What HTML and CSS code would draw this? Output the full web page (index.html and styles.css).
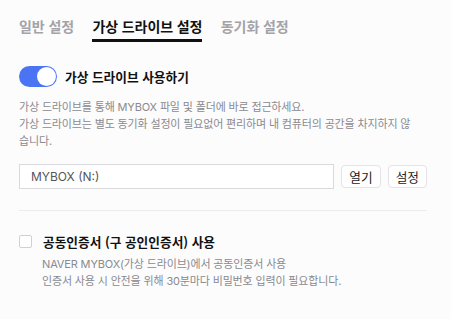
FILE: index.html
```html
<!DOCTYPE html>
<html lang="ko">
<head>
<meta charset="utf-8">
<link rel="stylesheet" href="styles.css">
</head>
<body>
<div class="page">
  <nav class="tabs">
    <div class="tab">일반 설정</div>
    <div class="tab active">가상 드라이브 설정</div>
    <div class="tab">동기화 설정</div>
  </nav>

  <section class="section">
    <div class="option-row">
      <span class="toggle"><span class="knob"></span></span>
      <span class="option-title">가상 드라이브 사용하기</span>
    </div>
    <p class="desc">가상 드라이브를 통해 MYBOX 파일 및 폴더에 바로 접근하세요.<br>가상 드라이브는 별도 동기화 설정이 필요없어 편리하며 내 컴퓨터의 공간을 차지하지 않습니다.</p>
    <div class="drive-row">
      <div class="drive-input">MYBOX (N:)</div>
      <button class="btn">열기</button>
      <button class="btn">설정</button>
    </div>
  </section>

  <hr class="divider">

  <section class="section">
    <div class="check-row">
      <span class="checkbox"></span>
      <span class="option-title">공동인증서 (구 공인인증서) 사용</span>
    </div>
    <p class="desc sub">NAVER MYBOX(가상 드라이브)에서 공동인증서 사용<br>인증서 사용 시 안전을 위해 30분마다 비밀번호 입력이 필요합니다.</p>
  </section>
</div>
</body>
</html>
```

FILE: styles.css
```css
html, body {
  margin: 0;
  padding: 0;
  background: #fcfcfd;
}
body {
  font-family: "Inter", "Noto Sans CJK KR", sans-serif;
  color: #111;
}
.page {
  padding: 0 24px 0 19px;
}
.tabs {
  display: flex;
  gap: 18.5px;
}
.tab {
  font-family: "Noto Sans CJK KR", sans-serif;
  font-size: 14px;
  font-weight: 700;
  line-height: 18px;
  letter-spacing: -0.1px;
  padding: 17px 0 4px;
  color: #a3a3a8;
  border-bottom: 3px solid transparent;
}
.tab.active {
  color: #111;
  border-bottom-color: #111;
}
.section {
  display: flex;
  flex-direction: column;
}
.option-row {
  display: flex;
  align-items: center;
  margin-top: 24px;
  height: 21px;
}
.toggle {
  position: relative;
  width: 38px;
  height: 21px;
  border-radius: 11px;
  background: #4a74f4;
  flex: none;
}
.knob {
  position: absolute;
  top: 1px;
  right: 1px;
  width: 19px;
  height: 19px;
  border-radius: 50%;
  background: #fff;
}
.option-title {
  margin-left: 8px;
  font-family: "Noto Sans CJK KR", sans-serif;
  font-size: 12.7px;
  font-weight: 700;
  line-height: 17px;
  color: #111;
}
.desc {
  margin: 12px 0 0;
  padding-right: 10px;
  font-size: 11px;
  line-height: 17px;
  letter-spacing: -0.15px;
  color: #8a8a8f;
  word-break: break-all;
}
.drive-row {
  display: flex;
  align-items: center;
  gap: 7px;
  margin-top: 14px;
}
.drive-input {
  flex: 1;
  height: 23px;
  border: 1px solid #d9d9de;
  background: #fff;
  padding-left: 11px;
  font-size: 12px;
  line-height: 23px;
  color: #55555a;
}
.btn {
  height: 23px;
  padding: 0 7px;
  border: 1px solid #e3e3e8;
  border-radius: 4px;
  background: #fff;
  font-family: "Noto Sans CJK KR", sans-serif;
  font-size: 12.7px;
  color: #222;
  line-height: 21px;
}
.divider {
  margin: 21px 0 0;
  border: 0;
  border-top: 1px solid #ececef;
}
.check-row {
  display: flex;
  align-items: center;
  margin-top: 22px;
  height: 17px;
}
.checkbox {
  width: 11px;
  height: 11px;
  border: 1px solid #cfcfd4;
  border-radius: 2px;
  background: #fff;
  flex: none;
}
.check-row .option-title {
  margin-left: 11px;
}
.desc.sub {
  margin-top: 6px;
  padding-left: 23px;
}
```
